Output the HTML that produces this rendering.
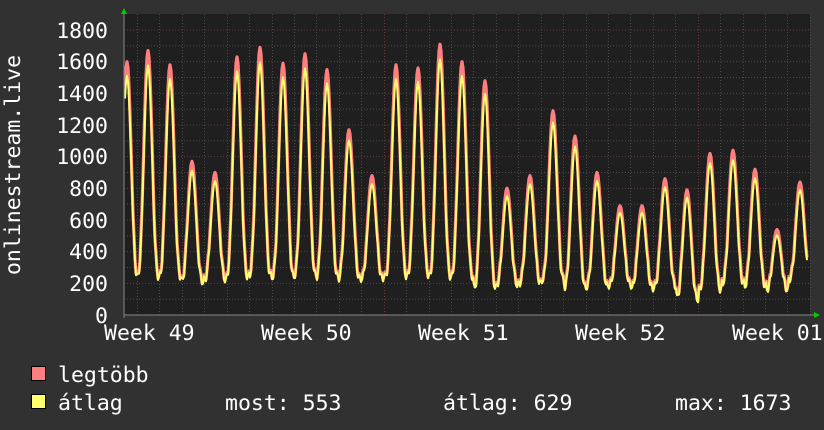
<!DOCTYPE html>
<html><head><meta charset="utf-8"><style>
body{margin:0;background:#313131;width:824px;height:430px;overflow:hidden}
svg{display:block}
text{font-family:"DejaVu Sans Mono","Liberation Mono",monospace;fill:#fff;font-size:21.5px}
</style></head><body>
<svg id="s" width="824" height="430" xmlns="http://www.w3.org/2000/svg">
<rect x="124" y="14" width="686" height="301" fill="#1f1f1f"/>
<g id="grid"></g>
<path id="mx" fill="none" stroke="#ff7f7f" stroke-width="3.2" stroke-linejoin="round"/>
<path id="av" fill="none" stroke="#ffff70" stroke-width="2" stroke-linejoin="round"/>
<line x1="124" y1="315" x2="814" y2="315" stroke="#888" stroke-width="1"/>
<line x1="124" y1="12" x2="124" y2="318" stroke="#888" stroke-width="1"/>
<polygon points="121,14 127,14 124,8" fill="#0c0"/>
<polygon points="814,312 814,318 820,315" fill="#0c0"/>
<g text-anchor="end">
<text x="108" y="38">1800</text><text x="108" y="69">1600</text><text x="108" y="101">1400</text>
<text x="108" y="133">1200</text><text x="108" y="164">1000</text><text x="108" y="196">800</text>
<text x="108" y="228">600</text><text x="108" y="259">400</text><text x="108" y="291">200</text>
<text x="108" y="323">0</text>
</g>
<text x="104" y="340">Week 49</text><text x="261" y="340">Week 50</text><text x="418" y="340">Week 51</text>
<text x="575" y="340">Week 52</text><text x="732" y="340">Week 01</text>
<text transform="translate(20,165) rotate(-90)" text-anchor="middle">onlinestream.live</text>
<rect x="31.5" y="366.5" width="14" height="14" fill="#ff7f7f" stroke="#000"/>
<rect x="31.5" y="394.5" width="14" height="14" fill="#ffff70" stroke="#000"/>
<text x="58" y="382">legtöbb</text>
<text x="58" y="410">átlag</text>
<text x="225" y="410">most: 553</text>
<text x="443" y="410">átlag: 629</text>
<text x="675" y="410">max: 1673</text>
</svg>
<script>
var g=document.getElementById('grid'),h='';
function Y(v){return 315-v*0.15833;}
for(var v=100;v<=1800;v+=100){var y=Y(v);h+='<line x1="124" x2="810" y1="'+y+'" y2="'+y+'" stroke="'+(v%200?'#4a4a4a':'#6a3a3a')+'" stroke-dasharray="1,2"/>';}
for(var x=137;x<810;x+=22.43){var xx=Math.round(x)+0.5;h+='<line y1="14" y2="315" x1="'+xx+'" x2="'+xx+'" stroke="#4a4a4a" stroke-dasharray="1,2"/>';}
[227,384,541,698].forEach(function(x){h+='<line y1="14" y2="315" x1="'+(x+.5)+'" x2="'+(x+.5)+'" stroke="#6a3a3a" stroke-dasharray="1,2"/>';});
g.innerHTML=h;
var pk=[[127,1600],[148,1670],[170,1580],[192,970],[215,900],[237,1630],[260,1690],[283,1590],[305,1650],[327,1550],[349,1170],[372,880],[396,1580],[418,1560],[440,1710],[462,1600],[485,1480],[507,800],[530,880],[553,1290],[575,1130],[597,900],[620,690],[642,690],[665,860],[687,790],[710,1020],[733,1040],[755,920],[777,540],[800,840]];
var tr=[250,250,250,220,230,250,260,250,260,250,240,240,250,260,250,250,180,200,210,230,180,190,200,180,190,110,170,210,190,170,240];
function val(x,f){for(var i=0;i<pk.length;i++){var d=(x-pk[i][0])/11.2;if(Math.abs(d)<1.05){var c=Math.cos(Math.min(Math.abs(d),1)*Math.PI/2);var t=tr[i];var p=t+(pk[i][1]*f-t)*Math.pow(c,3);var sh=Math.abs(d)>0.5?Math.sin(x*1.7)*25:0;return p+sh;}}return 250;}
function path(f,o){var d='';for(var x=125;x<=807;x+=1){d+=(x==125?'M':'L')+x+','+Y(val(x,f)-o).toFixed(1);}return d;}
document.getElementById('mx').setAttribute('d',path(1,0));
document.getElementById('av').setAttribute('d',path(0.95,10));
</script>
</body></html>
